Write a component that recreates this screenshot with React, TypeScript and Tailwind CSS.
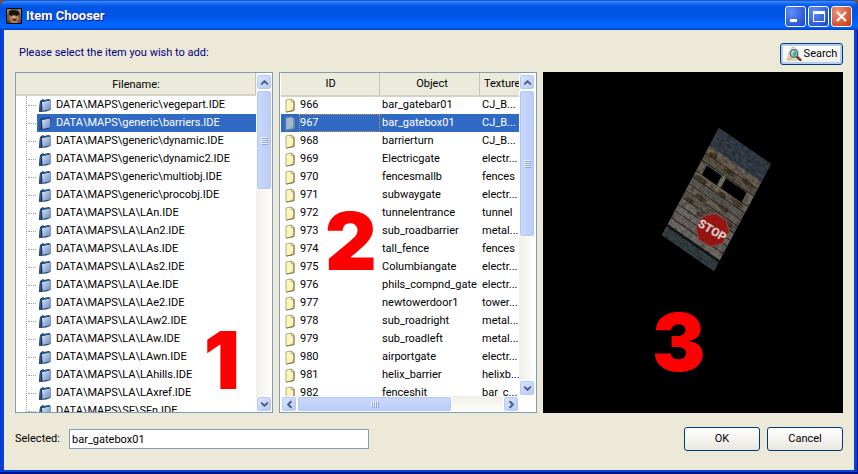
import { ChevronDown, ChevronLeft, ChevronRight, ChevronUp } from 'lucide-react';

const files = [
  'DATA\\MAPS\\generic\\vegepart.IDE',
  'DATA\\MAPS\\generic\\barriers.IDE',
  'DATA\\MAPS\\generic\\dynamic.IDE',
  'DATA\\MAPS\\generic\\dynamic2.IDE',
  'DATA\\MAPS\\generic\\multiobj.IDE',
  'DATA\\MAPS\\generic\\procobj.IDE',
  'DATA\\MAPS\\LA\\LAn.IDE',
  'DATA\\MAPS\\LA\\LAn2.IDE',
  'DATA\\MAPS\\LA\\LAs.IDE',
  'DATA\\MAPS\\LA\\LAs2.IDE',
  'DATA\\MAPS\\LA\\LAe.IDE',
  'DATA\\MAPS\\LA\\LAe2.IDE',
  'DATA\\MAPS\\LA\\LAw2.IDE',
  'DATA\\MAPS\\LA\\LAw.IDE',
  'DATA\\MAPS\\LA\\LAwn.IDE',
  'DATA\\MAPS\\LA\\LAhills.IDE',
  'DATA\\MAPS\\LA\\LAxref.IDE',
  'DATA\\MAPS\\SF\\SFn.IDE',
];

const items = [
  { id: 966, object: 'bar_gatebar01', texture: 'CJ_B...' },
  { id: 967, object: 'bar_gatebox01', texture: 'CJ_B...' },
  { id: 968, object: 'barrierturn', texture: 'CJ_B...' },
  { id: 969, object: 'Electricgate', texture: 'electr...' },
  { id: 970, object: 'fencesmallb', texture: 'fences' },
  { id: 971, object: 'subwaygate', texture: 'electr...' },
  { id: 972, object: 'tunnelentrance', texture: 'tunnel' },
  { id: 973, object: 'sub_roadbarrier', texture: 'metal...' },
  { id: 974, object: 'tall_fence', texture: 'fences' },
  { id: 975, object: 'Columbiangate', texture: 'electr...' },
  { id: 976, object: 'phils_compnd_gate', texture: 'electr...' },
  { id: 977, object: 'newtowerdoor1', texture: 'tower...' },
  { id: 978, object: 'sub_roadright', texture: 'metal...' },
  { id: 979, object: 'sub_roadleft', texture: 'metal...' },
  { id: 980, object: 'airportgate', texture: 'electr...' },
  { id: 981, object: 'helix_barrier', texture: 'helixb...' },
  { id: 982, object: 'fenceshit', texture: 'bar_c...' },
];

const selectedFile = files[1];
const selectedId = 967;

const planks = [
  { y: 21, h: 8, fill: '#6b6052' },
  { y: 29, h: 8, fill: '#5e5547' },
  { y: 37, h: 12, fill: '#6d665c' },
  { y: 49, h: 7, fill: '#6a5f52' },
  { y: 56, h: 8, fill: '#5f5c57' },
  { y: 64, h: 7, fill: '#6a625a' },
  { y: 71, h: 8, fill: '#625a51' },
  { y: 79, h: 8, fill: '#6f6a66' },
  { y: 87, h: 7, fill: '#736e6a' },
  { y: 94, h: 8, fill: '#6a6562' },
  { y: 102, h: 8, fill: '#716c68' },
];

const stains = [
  [3, 24, 10], [24, 29, 12], [44, 27, 14], [2, 51, 13], [30, 52, 9], [46, 50, 12],
  [10, 66, 14], [36, 62, 12], [4, 75, 9], [20, 80, 10], [48, 72, 11],
];

const AppIcon = () => (
  <svg width="16" height="16" viewBox="0 0 16 16" className="shrink-0">
    <rect width="16" height="16" fill="#130c08" />
    <rect x="1" y="1" width="14" height="14" fill="#6e5b4b" />
    <path d="M1 1h4l-1 3-3 2zM12 1h3v6l-3-2z" fill="#93806d" />
    <path d="M4 6l3-1 5 1 1 4-2 5H6l-3-4z" fill="#b07a58" />
    <path d="M3 3l4-1 5 1 2 3-3 2-3-1-3 1-2-2z" fill="#1b1512" />
    <path d="M7 8h2l1 2-2 1-2-1z" fill="#e0ab86" />
    <path d="M6 12l2-2 3 2-2 1z" fill="#51261a" />
    <path d="M1 11l3 2 1 2H1zM12 15l2-4 1 4z" fill="#434a3e" />
  </svg>
);

const FolderIcon = () => (
  <svg width="14" height="16" viewBox="0 0 14 16" className="ml-px shrink-0">
    <defs>
      <linearGradient id="folder" x1="0" y1="0" x2="1" y2="1">
        <stop offset="0" stopColor="#dfe7f7" />
        <stop offset="1" stopColor="#6484c0" />
      </linearGradient>
    </defs>
    <path d="M2 4L5 2l1 1 5-1 1.500 1v10L8 14.500l-7 .5z" fill="#16335c" />
    <path d="M4 5L12 3.500l.5 9L4.500 14z" fill="url(#folder)" />
    <path d="M2 4.500l1.500.5L3 14H1z" fill="#2c5688" />
    <path d="M3 4l2-1.500.7 1L11 2.500v1L4 5z" fill="#1d5f8a" />
  </svg>
);

const FileIcon = ({ active }: { active?: boolean }) => (
  <svg width="10" height="15" viewBox="0 0 10 15">
    <path d="M1 2l5-1 3 2v9.500l-8 1.500z" fill={active ? '#a6b9c9' : '#fbf6bd'} stroke={active ? '#7d94aa' : '#b3ad7c'} strokeWidth="1" />
    <path d="M6 1l.5 3L9 3.500z" fill={active ? '#d9e3ec' : '#fffef0'} stroke={active ? '#7d94aa' : '#8a845d'} strokeWidth=".6" />
    <path d="M5 12.800l4-.8V7z" fill={active ? '#8fa6ba' : '#e9de90'} />
    <path d="M9 3.500v9L1.500 14" fill="none" stroke={active ? '#6d859d' : '#77714c'} />
  </svg>
);

const SearchIcon = () => (
  <svg width="16" height="16" viewBox="0 0 16 16" className="shrink-0">
    <path d="M1 14L3 6l2-1V2l3-1 4 4v9z" fill="#f1e8c9" stroke="#c3b07f" strokeWidth=".7" />
    <path d="M1 14l3-4 4 4z" fill="#d6c08a" />
    <path d="M10.500 10.500l4 3.500" stroke="#7a3d22" strokeWidth="2.400" strokeLinecap="round" />
    <circle cx="8" cy="7.500" r="3.800" fill="#8ccbd8" stroke="#4e7280" strokeWidth="1.300" />
    <path d="M6 7a2 2 0 012-2" stroke="#e5fbff" fill="none" />
    <path d="M8 5.500v4.500M9.500 6v3" stroke="#37884a" strokeWidth=".9" />
  </svg>
);

const scrollButton =
  'flex size-4 shrink-0 items-center justify-center rounded-[3px] border border-white bg-linear-to-br from-[#dbe6fe] to-[#b5c9f7] text-[#4d6185] shadow-[inset_0_0_0_1px_#b7c9f2]';

const VerticalScrollbar = ({ thumb }: { thumb: string }) => (
  <div className="flex w-4 shrink-0 flex-col bg-linear-to-r from-[#f0efe8] to-[#fefefb] pt-px">
    <button aria-label="Scroll up" className={scrollButton}>
      <ChevronUp size={11} strokeWidth={4.5} />
    </button>
    <div className="flex min-h-0 flex-1 flex-col">
      <div className={`${thumb} flex flex-col items-center justify-center gap-px rounded-[3px] border border-white bg-linear-to-r from-[#cbd9fd] to-[#b9cbf7] shadow-[inset_0_0_0_1px_#b4c6f3]`}>
        {[0, 1, 2, 3].map((i) => (
          <span key={i} className="h-px w-1.5 bg-[#edf3ff] shadow-[1px_1px_0_#8ca5dd]" />
        ))}
      </div>
    </div>
    <button aria-label="Scroll down" className={scrollButton}>
      <ChevronDown size={11} strokeWidth={4.5} />
    </button>
  </div>
);

const HorizontalScrollbar = () => (
  <div className="flex h-4 shrink-0 bg-linear-to-b from-[#f0efe8] to-[#fefefb]">
    <button aria-label="Scroll left" className={scrollButton}>
      <ChevronLeft size={11} strokeWidth={4.5} />
    </button>
    <div className="flex min-w-0 flex-1">
      <div className="flex w-3/4 items-center justify-center gap-px rounded-[3px] border border-white bg-linear-to-b from-[#cbd9fd] to-[#b9cbf7] shadow-[inset_0_0_0_1px_#b4c6f3]">
        {[0, 1, 2, 3].map((i) => (
          <span key={i} className="h-1.5 w-px bg-[#edf3ff] shadow-[1px_1px_0_#8ca5dd]" />
        ))}
      </div>
    </div>
    <button aria-label="Scroll right" className={scrollButton}>
      <ChevronRight size={11} strokeWidth={4.5} />
    </button>
  </div>
);

const Marker = ({ className, children }: { className: string; children: string }) => (
  <span className={`pointer-events-none absolute font-[Inter,sans-serif] text-[80px] leading-[84px] font-black text-[#ff0000] ${className}`}>
    {children}
  </span>
);

const FileTree = () => (
  <section className="relative flex min-h-0 min-w-0 border border-[#7f9db9] bg-white">
    <div className="min-w-0 flex-1 overflow-hidden">
      <h2 className="h-[23px] border-b-2 border-[#d6d2c2] bg-[#ebeadb] text-center leading-6 shadow-[inset_-1px_0_0_#c7c5b2]">
        Filename:
      </h2>
      <ul className="ml-2.5 border-l border-dotted border-[#a0a0a0]">
        {files.map((file) => (
          <li key={file} className="flex h-[18px] items-center">
            <span className="ml-px w-2 border-t border-dotted border-[#a0a0a0]" />
            <button
              className={`ml-px flex h-full min-w-0 flex-1 items-center gap-1 whitespace-nowrap ${
                file === selectedFile ? 'bg-[#316ac5] text-white' : ''
              }`}
            >
              <FolderIcon />
              {file}
            </button>
          </li>
        ))}
      </ul>
    </div>
    <VerticalScrollbar thumb="h-[100px]" />
    <Marker className="right-8 bottom-2.5">1</Marker>
  </section>
);

const ItemTable = () => (
  <section className="relative flex min-h-0 min-w-0 border border-[#7f9db9] bg-white px-px">
    <div className="flex min-w-0 flex-1 flex-col">
      <div className="min-h-0 flex-1 overflow-hidden">
        <table className="w-full table-fixed border-collapse">
          <colgroup>
            <col className="w-[18px]" />
            <col className="w-[81px]" />
            <col className="w-[100px]" />
            <col />
          </colgroup>
          <thead>
            <tr className="h-[23px] border-b-2 border-[#d6d2c2] bg-[#ebeadb]">
              <th colSpan={2} className="p-0 font-normal shadow-[inset_-1px_0_0_#c7c5b2]">ID</th>
              <th className="p-0 pl-1 font-normal shadow-[inset_-1px_0_0_#c7c5b2]">Object</th>
              <th className="overflow-hidden p-0 pl-1 text-left font-normal">Texture</th>
            </tr>
          </thead>
          <tbody>
            {items.map(({ id, object, texture }) => (
              <tr key={id} className={`h-[18px] ${id === selectedId ? 'bg-[#316ac5] text-white' : ''}`}>
                <td className="p-0 pl-1">
                  <FileIcon active={id === selectedId} />
                </td>
                <td className={`p-0 pl-px ${id === selectedId ? 'outline-1 -outline-offset-1 outline-dotted outline-[#ce953a]' : ''}`}>{id}</td>
                <td className="p-0 pl-0.5 whitespace-nowrap">{object}</td>
                <td className="overflow-hidden p-0 pl-0.5 whitespace-nowrap">{texture}</td>
              </tr>
            ))}
          </tbody>
        </table>
      </div>
      <HorizontalScrollbar />
    </div>
    <div className="flex pb-4">
      <VerticalScrollbar thumb="h-[147px]" />
    </div>
    <Marker className="top-[126px] left-[45px]">2</Marker>
  </section>
);

const Preview = () => (
  <section className="relative min-h-0 min-w-0 bg-black">
    <svg viewBox="0 0 300 341" className="size-full" role="img" aria-label="bar_gatebox01">
      <defs>
        <filter id="grain" x="0" y="0" width="1" height="1">
          <feTurbulence type="fractalNoise" baseFrequency=".25 .35" numOctaves="3" seed="4" />
          <feColorMatrix values="0 0 0 0 0  0 0 0 0 0  0 0 0 0 0  2 0 0 0 -.7" />
        </filter>
      </defs>
      <g transform="matrix(.825 .571 -.471 .884 176 56)">
        <rect width="63" height="121" fill="#6a645c" />
        {planks.map(({ y, h, fill }) => (
          <g key={y}>
            <rect y={y} width="63" height={h} fill={fill} />
            <rect y={y + h - 1} width="63" height="1" fill="#2b2723" />
          </g>
        ))}
        {stains.map(([x, y, w]) => (
          <ellipse key={`${x}-${y}`} cx={x + w / 2} cy={y + 2} rx={w / 2} ry="2.5" fill="#332618" opacity=".6" />
        ))}
        <rect width="63" height="20" fill="#323d4a" />
        <path d="M0 4h63M0 8h63M0 12h63M0 16h63" stroke="#4b4640" strokeWidth="1" strokeDasharray="7 3 12 5" />
        <rect y="110" width="63" height="11" fill="#344144" />
        <rect y="109" width="63" height="2.5" fill="#151617" />
        <rect width="63" height="121" filter="url(#grain)" opacity=".4" />
        <rect x="7" y="38" width="18" height="10.5" />
        <rect x="30" y="37.5" width="25" height="11" />
        <path d="M27.5 36v16" stroke="#77736c" strokeWidth="1.5" />
      </g>
      <g transform="translate(169.5 158) rotate(31)">
        <path d="M-6.5-15.5h13l9 9v13l-9 9h-13l-9-9v-13z" fill="#961512" stroke="#76534c" strokeWidth="1" />
        <text y="4.500" textAnchor="middle" fontSize="12" fontWeight="900" fill="#cfc9c6" fontFamily="Roboto, sans-serif">
          STOP
        </text>
      </g>
    </svg>
    <Marker className="top-[228px] left-[109px]">3</Marker>
  </section>
);

const captionButton =
  'flex size-[21px] items-center justify-center rounded-[3px] border border-white bg-radial-[at_30%_25%] from-[#5f8ff5] to-[#1941cf]';

const TitleBar = () => (
  <header className="flex h-[30px] shrink-0 items-center justify-between rounded-t-md bg-[linear-gradient(#0a47c8_0%,#3d8bfb_6%,#1468f2_12%,#0054e3_24%,#0055e6_52%,#0265ff_80%,#0265ff_90%,#0041c4_100%)] px-1.5 pt-0.5">
    <div className="flex items-center gap-1">
      <AppIcon />
      <h1 className="font-[Roboto,sans-serif] text-[13px] font-bold text-white [text-shadow:1px_1px_0_#0f1089]">Item Chooser</h1>
    </div>
    <div className="flex gap-0.5">
      <button aria-label="Minimize" className={captionButton}>
        <span className="mt-2 mr-1 h-[3px] w-[7px] bg-white" />
      </button>
      <button aria-label="Maximize" className={captionButton}>
        <span className="h-[11px] w-3 border border-t-[3px] border-white" />
      </button>
      <button
        aria-label="Close"
        className="flex size-[21px] items-center justify-center rounded-[3px] border border-white bg-radial-[at_30%_25%] from-[#f0937a] to-[#c9330d]"
      >
        <svg width="13" height="13" viewBox="0 0 13 13">
          <path d="M2 2l9 9M11 2l-9 9" stroke="#fff" strokeWidth="2.200" />
        </svg>
      </button>
    </div>
  </header>
);

const dialogButton =
  'flex h-6 w-19 items-center justify-center rounded-[3px] border border-[#003c74] bg-linear-to-b from-white via-[#f5f4ef] to-[#e8e6dd]';

const App = () => {
  return (
    <div className="h-screen bg-[#6f5345]">
      <div className="flex h-full flex-col overflow-hidden rounded-t-lg bg-[#0842d0] font-[Roboto,sans-serif] text-[11px] text-black shadow-[inset_0_-2px_0_#00138c,inset_-1px_0_0_#00138c,inset_1px_0_0_#0831d9]">
        <TitleBar />
        <main className="mx-1 mb-1 flex min-h-0 flex-1 flex-col bg-[#ece9d8] px-[11px] pt-[13px]">
          <div className="flex items-start justify-between pb-[7px]">
            <p className="pt-px pl-1 leading-[18px] text-[#00007c]">Please select the item you wish to add:</p>
            <button className="flex h-[22px] w-[63px] items-center justify-center gap-0.5 rounded-[3px] border border-[#003c74] bg-linear-to-b from-white to-[#f0efe8] shadow-[inset_0_0_0_2px_#b5cdf2]">
              <SearchIcon />
              Search
            </button>
          </div>
          <div className="grid min-h-0 flex-1 grid-cols-[258fr_258fr_300fr] grid-rows-1 gap-1.5">
            <FileTree />
            <ItemTable />
            <Preview />
          </div>
          <footer className="flex items-center justify-between pt-3.5 pb-[19px]">
            <div className="flex items-center">
              <label htmlFor="selected" className="w-[54px]">
                Selected:
              </label>
              <input
                id="selected"
                type="text"
                defaultValue="bar_gatebox01"
                className="h-5 w-[300px] border border-[#7f9db9] bg-white px-0.5"
              />
            </div>
            <div className="flex gap-[7px]">
              <button className={dialogButton}>OK</button>
              <button className={dialogButton}>Cancel</button>
            </div>
          </footer>
        </main>
      </div>
    </div>
  );
};

export default App;
